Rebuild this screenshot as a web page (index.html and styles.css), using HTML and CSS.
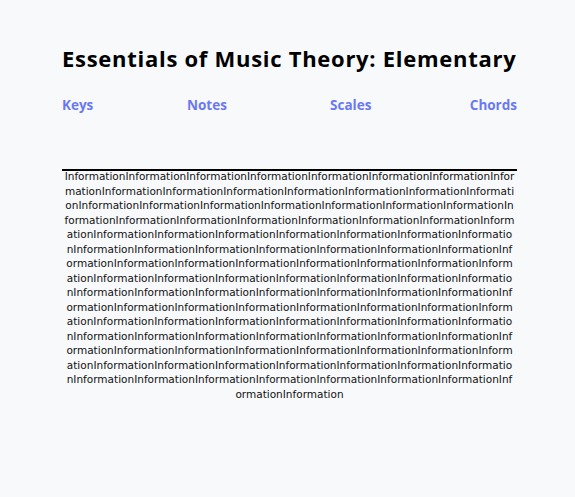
FILE: index.html
```html
<!DOCTYPE html>
<html>
<head>
<meta charset="utf-8">
<link rel="stylesheet" href="styles.css">
</head>
<body>
<div class="page">
  <h1 class="title">Essentials of Music Theory: Elementary</h1>
  <nav class="nav">
    <a class="nav-link" href="#">Keys</a>
    <a class="nav-link" href="#">Notes</a>
    <a class="nav-link" href="#">Scales</a>
    <a class="nav-link nav-link-last" href="#">Chords</a>
  </nav>
  <div class="info"><p class="info-text">InformationInformationInformationInformationInformationInformationInformationInformation<!--
-->InformationInformationInformationInformationInformationInformationInformationInformation<!--
-->InformationInformationInformationInformationInformationInformationInformationInformation<!--
-->InformationInformationInformationInformationInformationInformationInformationInformation<!--
-->InformationInformationInformationInformationInformationInformationInformationInformation<!--
-->InformationInformationInformationInformationInformationInformationInformationInformation<!--
-->InformationInformationInformationInformationInformationInformationInformationInformation<!--
-->InformationInformationInformationInformationInformationInformationInformationInformation<!--
-->InformationInformationInformationInformationInformationInformationInformationInformation<!--
-->InformationInformationInformationInformationInformationInformationInformationInformation<!--
-->InformationInformationInformationInformationInformationInformationInformationInformation<!--
-->InformationInformationInformationInformationInformationInformationInformationInformation<!--
-->InformationInformationInformationInformationInformationInformationInformationInformation<!--
-->InformationInformationInformationInformationInformationInformationInformationInformation</p></div>
</div>
</body>
</html>
```

FILE: styles.css
```css
html, body {
  margin: 0;
  padding: 0;
  background: #f8f9fb;
}
.page {
  width: 455px;
  margin-left: 62px;
  padding-top: 43px;
}
.title {
  margin: 0;
  font-family: "Open Sans", "Liberation Sans", sans-serif;
  font-weight: 700;
  font-size: 22px;
  line-height: 30px;
  letter-spacing: 0.72px;
  color: #000;
  white-space: nowrap;
}
.nav {
  display: grid;
  grid-template-columns: 125px 143px 1fr auto;
  margin-top: 23px;
}
.nav-link {
  font-family: "Open Sans", "Liberation Sans", sans-serif;
  font-weight: 700;
  font-size: 13.5px;
  line-height: 18px;
  color: #6a78f4;
  text-decoration: none;
}
.nav-link-last {
  justify-self: end;
}
.info {
  margin-top: 55px;
  border-top: 2px solid #000;
  padding: 0 2.2px;
}
.info-text {
  margin: -2px 0 0;
  font-family: "DejaVu Sans", sans-serif;
  font-size: 10.5px;
  line-height: 14.5px;
  color: #111;
  text-align: center;
  word-break: break-all;
}
```
